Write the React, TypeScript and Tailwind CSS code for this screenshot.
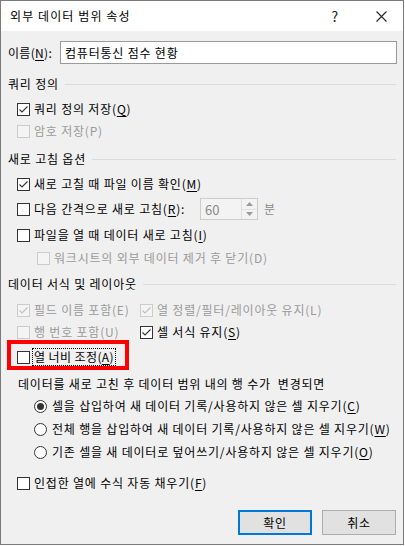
import type { ReactNode } from 'react';

const font = { fontFamily: '"Noto Sans CJK KR", "Noto Sans", sans-serif' };

function CheckBox({ checked, disabled }: { checked?: boolean; disabled?: boolean }) {
  return (
    <span
      className={`w-[13px] h-[13px] shrink-0 border flex items-center justify-center ${
        disabled ? 'border-[#cccccc] bg-[#f4f4f4]' : 'border-[#333333] bg-white'
      }`}
    >
      {checked && (
        <svg width="11" height="11" viewBox="0 0 11 11">
          <polyline
            points="1.5,5.5 4,8 9.5,2.5"
            fill="none"
            stroke={disabled ? '#bfbfbf' : '#333333'}
            strokeWidth="1.1"
          />
        </svg>
      )}
    </span>
  );
}

function Check({
  checked,
  disabled,
  children,
  className = '',
}: {
  checked?: boolean;
  disabled?: boolean;
  children: ReactNode;
  className?: string;
}) {
  return (
    <div className={`h-[22px] flex items-center gap-[4px] ${className}`}>
      <CheckBox checked={checked} disabled={disabled} />
      <span className={`whitespace-nowrap ${disabled ? 'text-[#9a9a9a]' : 'text-black'}`}>{children}</span>
    </div>
  );
}

function Radio({ selected, children, className = '' }: { selected?: boolean; children: ReactNode; className?: string }) {
  return (
    <div className={`h-[22px] flex items-center gap-[5px] pl-[26px] ${className}`}>
      <span className="w-[13px] h-[13px] shrink-0 rounded-full border border-[#333333] bg-white flex items-center justify-center">
        {selected && <span className="w-[7px] h-[7px] rounded-full bg-[#333333]" />}
      </span>
      <span className="whitespace-nowrap">{children}</span>
    </div>
  );
}

function Group({ title, className = '' }: { title: string; className?: string }) {
  return (
    <div className={`h-[22px] flex items-center gap-[6px] ${className}`}>
      <span className="whitespace-nowrap">{title}</span>
      <span className="flex-1 h-px bg-[#dcdcdc]" />
    </div>
  );
}

const U = ({ children }: { children: ReactNode }) => <u className="underline-offset-2">{children}</u>;

export default function App() {
  return (
    <div className="w-[405px] h-[546px] bg-white text-[12px] leading-none tracking-[0.8px] text-black" style={font}>
      <div className="w-[404px] h-[545px] bg-[#f0f0f0] border border-[#7a7a7a] flex flex-col">
        <div className="h-[30px] bg-white flex items-center pl-[9px] shrink-0">
          <span className="whitespace-nowrap tracking-[1.1px]">외부 데이터 범위 속성</span>
          <span className="ml-auto mr-[37px] text-[14px] text-[#222]">?</span>
          <svg className="mr-[16px]" width="11" height="11" viewBox="0 0 11 11">
            <path d="M0.5 0.5 L10.5 10.5 M10.5 0.5 L0.5 10.5" stroke="#222" strokeWidth="1.1" />
          </svg>
        </div>

        <div className="flex flex-col px-[7px]">
          <div className="mt-[10px] h-[23px] flex items-center">
            <span className="w-[52px] whitespace-nowrap tracking-[0.3px]">
              이름(<U>N</U>):
            </span>
            <div className="flex-1 h-[23px] border border-[#9a9a9a] bg-white flex items-center pl-[4px] mr-[-1px]">
              컴퓨터통신 점수 현황
            </div>
          </div>

          <Group title="쿼리 정의" className="mt-[9px]" />
          <Check checked className="mt-[3px] pl-[9px]">
            쿼리 정의 저장(<U>Q</U>)
          </Check>
          <Check disabled className="pl-[9px]">
            암호 저장(P)
          </Check>

          <Group title="새로 고침 옵션" className="mt-[6px]" />
          <Check checked className="mt-[3px] pl-[9px]">
            새로 고칠 때 파일 이름 확인(<U>M</U>)
          </Check>
          <div className="mt-[3px] h-[22px] flex items-center pl-[9px]">
            <div className="w-[183px]">
              <Check>
                다음 간격으로 새로 고침(<U>R</U>):
              </Check>
            </div>
            <div className="w-[58px] h-[22px] border border-[#cccccc] bg-[#f3f3f3] flex items-center">
              <span className="flex-1 pl-[4px] text-[#8a8a8a] text-[13px] tracking-normal">60</span>
              <div className="w-[16px] h-full flex flex-col border-l border-[#e0e0e0]">
                <span className="flex-1 flex items-center justify-center border-b border-[#e0e0e0]">
                  <svg width="7" height="4" viewBox="0 0 7 4">
                    <path d="M0 4 L3.5 0 L7 4 Z" fill="#9a9a9a" />
                  </svg>
                </span>
                <span className="flex-1 flex items-center justify-center">
                  <svg width="7" height="4" viewBox="0 0 7 4">
                    <path d="M0 0 L3.5 4 L7 0 Z" fill="#9a9a9a" />
                  </svg>
                </span>
              </div>
            </div>
            <span className="ml-[6px] text-[#8a8a8a]">분</span>
          </div>
          <Check className="mt-[4px] pl-[9px]">
            파일을 열 때 데이터 새로 고침(<U>I</U>)
          </Check>
          <Check disabled className="mt-[1px] pl-[29px]">
            워크시트의 외부 데이터 제거 후 닫기(D)
          </Check>

          <Group title="데이터 서식 및 레이아웃" className="mt-[4px]" />
          <div className="mt-[4px] grid grid-cols-[123px_1fr] pl-[9px]">
            <Check checked disabled>
              필드 이름 포함(E)
            </Check>
            <Check checked disabled>
              열 정렬/필터/레이아웃 유지(L)
            </Check>
            <Check disabled>행 번호 포함(U)</Check>
            <Check checked>
              셀 서식 유지(<U>S</U>)
            </Check>
          </div>
          <div className="relative mt-[3px] h-[22px] flex items-center gap-[2px] pl-[9px]">
            <CheckBox />
            <span className="border border-dotted border-black px-[1px] h-[18px] flex items-center whitespace-nowrap tracking-[0.4px]">
              열 너비 조정(<U>A</U>)
            </span>
            <span className="absolute left-[-1px] top-[-6px] w-[122px] h-[30px] border-[4px] border-[#ff0000]" />
          </div>

          <div className="mt-[5px] h-[22px] flex items-center pl-[10px] whitespace-nowrap">
            데이터를 새로 고친 후 데이터 범위 내의 행 수가&nbsp; 변경되면
          </div>
          <Radio selected>
            셀을 삽입하여 새 데이터 기록/사용하지 않은 셀 지우기(<U>C</U>)
          </Radio>
          <Radio className="mt-[1px]">
            전체 행을 삽입하여 새 데이터 기록/사용하지 않은 셀 지우기(<U>W</U>)
          </Radio>
          <Radio className="mt-[1px]">
            기존 셀을 새 데이터로 덮어쓰기/사용하지 않은 셀 지우기(<U>O</U>)
          </Radio>

          <Check className="mt-[9px] pl-[9px]">
            인접한 열에 수식 자동 채우기(<U>F</U>)
          </Check>

          <div className="mt-[16px] flex justify-end gap-[10px]">
            <button className="w-[74px] h-[25px] border-2 border-[#0078d7] bg-[#e1e1e1] text-black">확인</button>
            <button className="w-[74px] h-[25px] border border-[#adadad] bg-[#e1e1e1] text-black">취소</button>
          </div>
        </div>
      </div>
    </div>
  );
}
